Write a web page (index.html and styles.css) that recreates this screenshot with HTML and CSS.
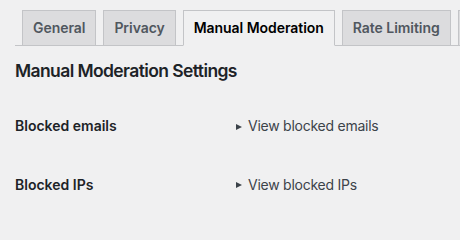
FILE: index.html
```html
<!DOCTYPE html>
<html lang="en">
<head>
<meta charset="utf-8">
<title>Manual Moderation Settings</title>
<link rel="stylesheet" href="styles.css">
</head>
<body>
<div class="wrap">
  <nav class="nav-tab-wrapper">
    <a class="nav-tab" href="#">General</a>
    <a class="nav-tab" href="#">Privacy</a>
    <a class="nav-tab nav-tab-active" href="#">Manual Moderation</a>
    <a class="nav-tab" href="#">Rate Limiting</a>
    <span class="nav-tab nav-tab-stub" aria-hidden="true"></span>
  </nav>
  <h2 class="section-title">Manual Moderation Settings</h2>
  <table class="form-table">
    <tbody>
      <tr>
        <th scope="row">Blocked emails</th>
        <td>
          <details class="toggle"><summary>View blocked emails</summary></details>
        </td>
      </tr>
      <tr>
        <th scope="row">Blocked IPs</th>
        <td>
          <details class="toggle"><summary>View blocked IPs</summary></details>
        </td>
      </tr>
    </tbody>
  </table>
</div>
</body>
</html>
```

FILE: styles.css
```css
html, body {
  margin: 0;
  padding: 0;
  background: #f0f0f1;
  overflow: hidden;
}
body {
  font-family: Inter, "Noto Sans", "Liberation Sans", sans-serif;
  font-size: 14px;
  color: #3c434a;
}
.wrap {
  padding: 10px 0 0 15px;
}
.nav-tab-wrapper {
  display: flex;
  flex-wrap: nowrap;
  align-items: flex-start;
  border-bottom: 1px solid #c3c4c7;
  height: 35px;
}
.nav-tab {
  flex: none;
  display: block;
  margin-left: 7px;
  padding: 5px 10px;
  border: 1px solid #c3c4c7;
  border-bottom: none;
  background: #dcdcde;
  color: #50575e;
  font-size: 14px;
  line-height: 24px;
  font-weight: 600;
  letter-spacing: -0.05px;
  text-decoration: none;
  white-space: nowrap;
}
.nav-tab-active {
  background: #f0f0f1;
  color: #000;
  border-bottom: 1px solid #f0f0f1;
}
.nav-tab-stub {
  width: 40px;
  height: 24px;
}
.section-title {
  margin: 13.6px 0 15px;
  font-size: 17.5px;
  line-height: 1.3;
  font-weight: 600;
  letter-spacing: -0.6px;
  color: #1d2327;
}
.form-table {
  border-collapse: collapse;
  margin: 0;
}
.form-table th {
  width: 200px;
  padding: 20px 10px 20px 0;
  text-align: left;
  vertical-align: top;
  line-height: 1.3;
  font-weight: 600;
  color: #1d2327;
}
.form-table td {
  padding: 15px 10px;
  line-height: 1.3;
  vertical-align: middle;
  color: #3c434a;
}
.toggle summary {
  list-style: none;
  display: flex;
  align-items: center;
  letter-spacing: -0.25px;
  cursor: pointer;
}
.toggle summary::-webkit-details-marker {
  display: none;
}
.toggle summary::before {
  content: "";
  width: 0;
  height: 0;
  border-top: 3.5px solid transparent;
  border-bottom: 3.5px solid transparent;
  border-left: 6px solid #3c434a;
  margin: 1px 6px 0 1px;
}
```
